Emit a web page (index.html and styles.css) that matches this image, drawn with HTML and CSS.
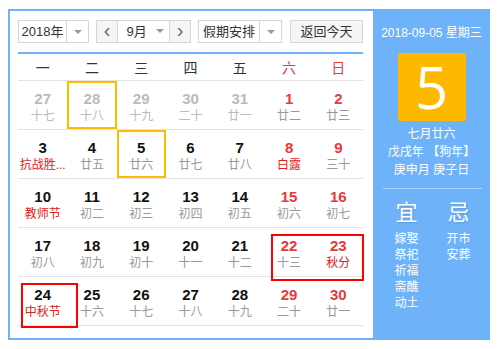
FILE: index.html
```html
<!DOCTYPE html>
<html lang="zh-CN">

<head>
  <meta charset="UTF-8">
  <title>万年历</title>
  <link rel="stylesheet" href="styles.css">
</head>

<body>
  <div class="cal">
    <div class="cal-main">
      <div class="toolbar">
        <div class="sel sel-year"><span class="sel-text">2018年</span><span class="sel-arrow"></span></div>
        <div class="month-group">
          <span class="nav-btn">&lsaquo;</span>
          <div class="sel sel-month"><span class="sel-text">9月</span><span class="sel-arrow"></span></div>
          <span class="nav-btn">&rsaquo;</span>
        </div>
        <div class="sel sel-holiday"><span class="sel-text">假期安排</span><span class="sel-arrow"></span></div>
        <span class="today-btn">返回今天</span>
      </div>

      <div class="week-head">
        <span>一</span><span>二</span><span>三</span><span>四</span><span>五</span>
        <span class="red">六</span><span class="red">日</span>
      </div>

      <div class="days">
        <div class="row">
          <div class="day other"><b>27</b><i>十七</i></div>
          <div class="day other mark"><b>28</b><i>十八</i></div>
          <div class="day other"><b>29</b><i>十九</i></div>
          <div class="day other"><b>30</b><i>二十</i></div>
          <div class="day other"><b>31</b><i>廿一</i></div>
          <div class="day wk"><b>1</b><i>廿二</i></div>
          <div class="day wk"><b>2</b><i>廿三</i></div>
        </div>
        <div class="row">
          <div class="day"><b>3</b><i class="fest">抗战胜...</i></div>
          <div class="day"><b>4</b><i>廿五</i></div>
          <div class="day mark"><b>5</b><i>廿六</i></div>
          <div class="day"><b>6</b><i>廿七</i></div>
          <div class="day"><b>7</b><i>廿八</i></div>
          <div class="day wk"><b>8</b><i class="fest">白露</i></div>
          <div class="day wk"><b>9</b><i>三十</i></div>
        </div>
        <div class="row">
          <div class="day"><b>10</b><i class="fest">教师节</i></div>
          <div class="day"><b>11</b><i>初二</i></div>
          <div class="day"><b>12</b><i>初三</i></div>
          <div class="day"><b>13</b><i>初四</i></div>
          <div class="day"><b>14</b><i>初五</i></div>
          <div class="day wk"><b>15</b><i>初六</i></div>
          <div class="day wk"><b>16</b><i>初七</i></div>
        </div>
        <div class="row">
          <div class="day"><b>17</b><i>初八</i></div>
          <div class="day"><b>18</b><i>初九</i></div>
          <div class="day"><b>19</b><i>初十</i></div>
          <div class="day"><b>20</b><i>十一</i></div>
          <div class="day"><b>21</b><i>十二</i></div>
          <div class="day wk"><b>22</b><i>十三</i></div>
          <div class="day wk"><b>23</b><i class="fest">秋分</i></div>
        </div>
        <div class="row">
          <div class="day"><b>24</b><i class="fest">中秋节</i></div>
          <div class="day"><b>25</b><i>十六</i></div>
          <div class="day"><b>26</b><i>十七</i></div>
          <div class="day"><b>27</b><i>十八</i></div>
          <div class="day"><b>28</b><i>十九</i></div>
          <div class="day wk"><b>29</b><i>二十</i></div>
          <div class="day wk"><b>30</b><i>廿一</i></div>
        </div>
        <!-- 红框选中 -->
        <div class="pick pick-a"></div>
        <div class="pick pick-b"></div>
      </div>
    </div>

    <div class="cal-side">
      <div class="side-date">2018-09-05 星期三</div>
      <div class="side-day">5</div>
      <div class="side-lunar">
        <p>七月廿六</p>
        <p>戊戌年 【狗年】</p>
        <p>庚申月 庚子日</p>
      </div>
      <div class="side-line"></div>
      <div class="yiji">
        <div class="yiji-col">
          <h3>宜</h3>
          <p>嫁娶</p>
          <p>祭祀</p>
          <p>祈福</p>
          <p>斋醮</p>
          <p>动土</p>
        </div>
        <div class="yiji-col">
          <h3>忌</h3>
          <p>开市</p>
          <p>安葬</p>
        </div>
      </div>
    </div>
  </div>
</body>

</html>
```

FILE: styles.css
```css
* {
  margin: 0;
  padding: 0;
  box-sizing: border-box;
}

body {
  font-family: "Liberation Sans", "Noto Sans CJK SC", sans-serif;
  background: #fff;
  color: #333;
}

.cal {
  width: 482px;
  height: 331px;
  margin: 9px 0 0 8px;
  border: 2px solid #6eb3fa;
  display: flex;
}

.cal-main {
  width: 363px;
  padding: 9px 10px 0 8px;
}

/* 顶部工具栏 */
.toolbar {
  display: flex;
  height: 23px;
  font-size: 13px;
}

.sel {
  display: flex;
  height: 23px;
  border: 1px solid #d6d6d6;
  background: #fff;
}

.sel-text {
  flex: 1;
  line-height: 21px;
  text-align: center;
  color: #333;
}

.sel-arrow {
  width: 22px;
  border-left: 1px solid #d6d6d6;
  position: relative;
}

.sel-arrow::after {
  content: "";
  position: absolute;
  left: 7px;
  top: 9px;
  border: 4px solid transparent;
  border-top: 4px solid #999;
  border-bottom: 0;
}

.sel-year {
  width: 72px;
}

.month-group {
  display: flex;
  margin-left: 7px;
  border: 1px solid #d6d6d6;
  height: 23px;
}

.nav-btn {
  width: 20px;
  line-height: 19px;
  text-align: center;
  font-size: 20px;
  color: #666;
  background: #f5f5f5;
}

.sel-month {
  width: 53px;
  height: 21px;
  border-top: 0;
  border-bottom: 0;
}

.sel-month .sel-text {
  line-height: 21px;
  padding-left: 6px;
}

.sel-month .sel-arrow {
  border-left: 0;
  width: 20px;
}

.sel-month .sel-arrow::after {
  top: 8px;
}

.sel-holiday {
  width: 85px;
  margin-left: 7px;
}

.today-btn {
  margin-left: 8px;
  width: 74px;
  height: 23px;
  line-height: 21px;
  text-align: center;
  border: 1px solid #d6d6d6;
  background: #f5f5f5;
  color: #333;
}

/* 星期 */
.week-head {
  display: grid;
  grid-template-columns: repeat(7, 1fr);
  margin-top: 9px;
  border-top: 2px solid #6eb3fa;
  height: 29px;
  border-bottom: 1px solid #e3e3e3;
  font-size: 14px;
  text-align: center;
  line-height: 28px;
  color: #333;
}

.red {
  color: #e8383d;
}

/* 日期 */
.days {
  position: relative;
}

.row {
  display: grid;
  grid-template-columns: repeat(7, 1fr);
  height: 49px;
  border-bottom: 1px solid #e3e3e3;
}

.row:last-of-type {
  border-bottom: 0;
}

.day {
  text-align: center;
  padding-top: 8px;
}

.day b {
  display: block;
  font-size: 15px;
  line-height: 20px;
  color: #111;
}

.day i {
  display: block;
  font-style: normal;
  font-size: 12px;
  line-height: 14px;
  color: #999;
}

.day.other b,
.day.other i {
  color: #bbb;
}

.day.wk b {
  color: #e8383d;
}

.day i.fest {
  color: #e02020;
}

.day.mark {
  box-shadow: inset 0 0 0 2px #ffbb00;
}

.pick {
  position: absolute;
  border: 2px solid #f00;
}

.pick-a {
  left: 3px;
  top: 202px;
  width: 57px;
  height: 45px;
}

.pick-b {
  left: 253px;
  top: 153px;
  width: 93px;
  height: 47px;
}

/* 右侧 */
.cal-side {
  flex: 1;
  margin: -2px -2px -2px 0;
  background: #6eb3fa;
  color: #fff;
  text-align: center;
  padding-top: 15px;
}

.side-date {
  font-size: 12px;
  line-height: 18px;
}

.side-day {
  width: 68px;
  height: 68px;
  margin: 11px auto 0;
  background: #ffb800;
  border-radius: 2px;
  font-family: "Open Sans", sans-serif;
  font-size: 58px;
  line-height: 68px;
}

.side-lunar {
  margin-top: 4px;
  font-size: 12px;
  line-height: 18px;
}

.side-line {
  margin: 9px 8px 0 10px;
  border-top: 1px solid rgba(255, 255, 255, .45);
}

.yiji {
  display: flex;
  justify-content: center;
  gap: 2px;
  margin-top: 11px;
  padding-left: 2px;
}

.yiji-col {
  width: 50px;
}

.yiji-col h3 {
  font-size: 22px;
  font-weight: normal;
  line-height: 26px;
  text-shadow: 1px 1px 2px rgba(0, 0, 0, .15);
}

.yiji-col p {
  font-size: 12px;
  line-height: 16px;
}

.yiji-col h3 + p {
  margin-top: 5px;
}
```
